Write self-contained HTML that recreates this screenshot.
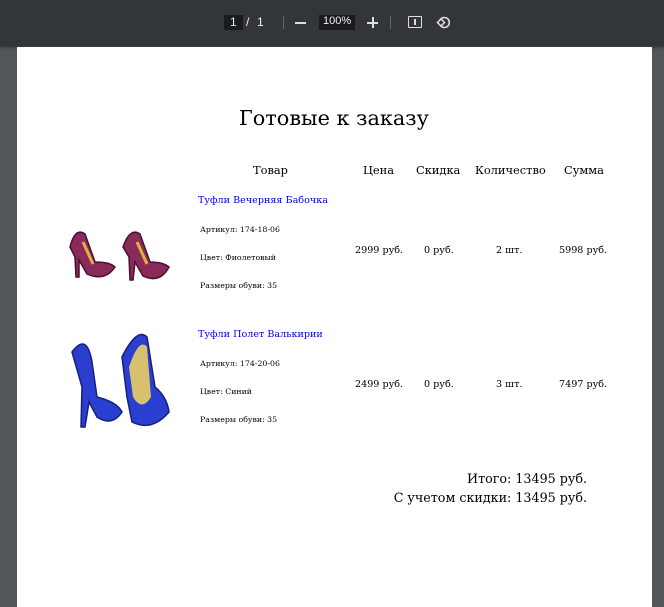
<!DOCTYPE html>
<html><head><meta charset="utf-8"><style>
body{margin:0;width:664px;height:600px;background:#525659;overflow:hidden;font-family:"DejaVu Serif","Liberation Serif",serif;position:relative}
.tb{position:absolute;left:0;top:0;width:664px;height:46px;background:#323639;box-shadow:0 1px 3px rgba(0,0,0,.5)}
.tb *{position:absolute;color:#f1f1f1;font-family:"Liberation Sans",sans-serif;font-size:12px}
.page{position:absolute;left:17px;top:47px;width:635px;height:560px;background:#fff}
.t{position:absolute;white-space:nowrap;color:#000}
</style></head><body>
<div class="tb">
<div style="left:224px;top:15px;width:19px;height:15px;background:#191b1c"></div>
<div style="left:230px;top:15px">1</div><div style="left:246px;top:15px">/</div><div style="left:257px;top:15px">1</div>
<div style="left:283px;top:16px;width:1px;height:13px;background:#666"></div>
<div style="left:295px;top:22px;width:11px;height:1.5px;background:#ddd"></div>
<div style="left:319px;top:15px;width:36px;height:15px;background:#191b1c"></div>
<div style="left:323px;top:15px;font-size:11px">100%</div>
<div style="left:367px;top:22px;width:11px;height:1.5px;background:#ddd"></div>
<div style="left:372px;top:17px;width:1.5px;height:11px;background:#ddd"></div>
<div style="left:390px;top:16px;width:1px;height:13px;background:#666"></div>
<div style="left:408px;top:16px;width:12px;height:10px;border:1.5px solid #ddd;border-radius:1px"></div>
<div style="left:414px;top:19px;width:1.5px;height:6px;background:#ddd"></div>
<svg style="left:436px;top:14px" width="16" height="16" viewBox="0 0 16 16"><path d="M4 6a5 5 0 1 1 0 5" fill="none" stroke="#ddd" stroke-width="1.6"/><rect x="2.5" y="6" width="5" height="5" transform="rotate(45 5 8.5)" fill="none" stroke="#ddd" stroke-width="1.5"/></svg>
</div>
<div class="page">
<div class="t" style="left:222px;top:59px;font-size:20.8px">Готовые к заказу</div>
<div class="t" style="left:236px;top:116px;font-size:11.4px">Товар</div>
<div class="t" style="left:346px;top:116px;font-size:11.4px">Цена</div>
<div class="t" style="left:399px;top:116px;font-size:11.4px">Скидка</div>
<div class="t" style="left:458px;top:116px;font-size:11.4px">Количество</div>
<div class="t" style="left:547px;top:116px;font-size:11.4px">Сумма</div>

<svg style="position:absolute;left:48px;top:165px" width="112" height="75" viewBox="0 0 112 75"><g fill="#8a2a5a" stroke="#4a1030" stroke-width="1.5">
<path d="M5 35 Q10 15 20 22 L30 50 Q45 50 50 55 Q40 70 22 62 L14 48 L14 65 L11 65 L10 45 Z"/>
<path d="M58 35 Q65 15 75 22 L85 50 Q98 50 104 55 Q95 72 78 64 L70 50 L68 68 L65 68 L64 45 Z"/></g>
<path d="M18 30 L28 52 M72 30 L82 52" stroke="#e0b040" stroke-width="3"/></svg>
<svg style="position:absolute;left:50px;top:280px" width="108" height="112" viewBox="0 0 108 112"><g fill="#2a3fcf" stroke="#15207a" stroke-width="1.5">
<path d="M5 25 Q20 5 25 35 L30 70 Q50 75 55 85 Q45 100 30 90 L22 75 L18 100 L14 100 L15 60 Z"/>
<path d="M55 30 Q70 0 80 10 L88 60 Q100 70 102 85 Q85 105 65 95 L60 70 Z"/></g>
<path d="M62 40 Q72 10 80 20 L84 70 Q75 85 66 70 Z" fill="#d8c070"/></svg>

<div class="t" style="left:181px;top:148px;font-size:9.6px;color:#0000ee">Туфли Вечерняя Бабочка</div>
<div class="t" style="left:183px;top:178px;font-size:7.8px">Артикул: 174-18-06</div>
<div class="t" style="left:183px;top:206px;font-size:7.8px">Цвет: Фиолетовый</div>
<div class="t" style="left:183px;top:234px;font-size:7.8px">Размеры обуви: 35</div>
<div class="t" style="left:338px;top:198px;font-size:9.6px">2999 руб.</div>
<div class="t" style="left:407px;top:198px;font-size:9.6px">0 руб.</div>
<div class="t" style="left:479px;top:198px;font-size:9.6px">2 шт.</div>
<div class="t" style="left:542px;top:198px;font-size:9.6px">5998 руб.</div>

<div class="t" style="left:181px;top:282px;font-size:9.6px;color:#0000ee">Туфли Полет Валькирии</div>
<div class="t" style="left:183px;top:312px;font-size:7.8px">Артикул: 174-20-06</div>
<div class="t" style="left:183px;top:340px;font-size:7.8px">Цвет: Синий</div>
<div class="t" style="left:183px;top:368px;font-size:7.8px">Размеры обуви: 35</div>
<div class="t" style="left:338px;top:332px;font-size:9.6px">2499 руб.</div>
<div class="t" style="left:407px;top:332px;font-size:9.6px">0 руб.</div>
<div class="t" style="left:479px;top:332px;font-size:9.6px">3 шт.</div>
<div class="t" style="left:542px;top:332px;font-size:9.6px">7497 руб.</div>

<div class="t" style="right:65px;top:424px;font-size:12.7px">Итого: 13495 руб.</div>
<div class="t" style="right:65px;top:443px;font-size:12.7px">С учетом скидки: 13495 руб.</div>
</div>
</body></html>
